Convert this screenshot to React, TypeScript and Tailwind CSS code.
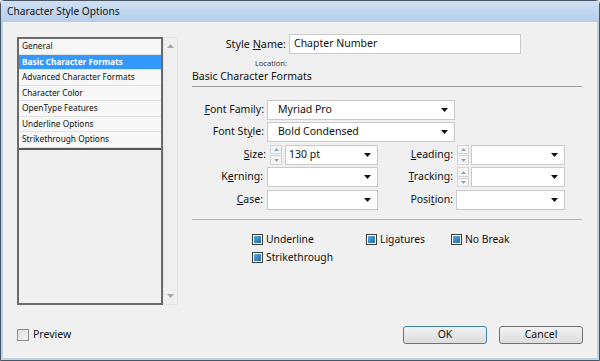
import React from "react";

const ui = "font-['Noto_Sans',sans-serif]";

function Arrow() {
  return (
    <svg width="7" height="4" viewBox="0 0 7 4" className="shrink-0">
      <path d="M0 0h7L3.5 4z" fill="#111" />
    </svg>
  );
}

function Select({ w, value, pad = "pl-[3px]" }: { w: string; value?: string; pad?: string }) {
  return (
    <div
      className={`${w} flex h-[20px] items-center justify-between border border-[#c9c9c9] bg-white ${pad} pr-[6px] text-[10.5px] text-[#111]`}
    >
      <span>{value}</span>
      <Arrow />
    </div>
  );
}

function Spinner() {
  return (
    <div className="flex h-[20px] w-[12px] shrink-0 flex-col gap-[1px]">
      {[0, 1].map((i) => (
        <div
          key={i}
          className="flex flex-1 items-center justify-center border border-[#d4d4d4] bg-[#f4f4f4]"
        >
          <svg width="5" height="3" viewBox="0 0 5 3">
            <path d={i === 0 ? "M0 3h5L2.5 0z" : "M0 0h5L2.5 3z"} fill="#8ea6bd" />
          </svg>
        </div>
      ))}
    </div>
  );
}

function Label({ w, children }: { w: string; children: React.ReactNode }) {
  return <div className={`${w} shrink-0 text-right text-[10.5px] text-[#111]`}>{children}</div>;
}

function Check({ label }: { label: string }) {
  return (
    <div className="flex items-center gap-[3px]">
      <div className="h-[11px] w-[11px] border border-[#3a3a3a] bg-white p-[1px]">
        <div className="h-full w-full bg-gradient-to-br from-[#5aa8dd] to-[#1f6aa8]" />
      </div>
      <span className="text-[10.3px] text-[#111]">{label}</span>
    </div>
  );
}

const items = [
  "General",
  "Basic Character Formats",
  "Advanced Character Formats",
  "Character Color",
  "OpenType Features",
  "Underline Options",
  "Strikethrough Options",
];

export default function App() {
  return (
    <div className={`${ui} h-[361px] w-[600px] overflow-hidden bg-[#f0f0f0]`}>
      <div className="flex h-full flex-col rounded-t-[4px] border border-[#4a5563] bg-[#bcd3ec]">
        {/* title bar */}
        <div className="flex h-[21px] items-center bg-gradient-to-b from-[#cfe0f3] to-[#b4cdea] pl-[6px] text-[10.2px] text-[#111]">
          Character Style Options
        </div>
        <div className="mx-[2px] mb-[2px] flex flex-1 flex-col bg-[#f0f0f0]">
          <div className="flex flex-1">
            {/* left list */}
            <div className="ml-[14px] mt-[15px] flex h-[268px]">
              <div className="flex w-[146px] flex-col border-2 border-[#6a6a6a] bg-[#f0f0f0]">
                {items.map((t, i) => (
                  <div
                    key={t}
                    className={`flex h-[15.5px] items-center border-b border-[#e2e2e2] pl-[3px] text-[8.3px] ${
                      i === 1 ? "bg-[#3399ff] font-bold text-white" : "bg-[#f7f7f7] text-[#111]"
                    }`}
                  >
                    {t}
                  </div>
                ))}
                <div className="border-t-2 border-[#555]" />
              </div>
              <div className="flex w-[15px] flex-col items-center justify-between border border-[#e4e4e4] bg-[#efefef] py-[6px]">
                <svg width="7" height="4" viewBox="0 0 7 4">
                  <path d="M0 4h7L3.5 0z" fill="#a8a8a8" />
                </svg>
                <svg width="7" height="4" viewBox="0 0 7 4">
                  <path d="M0 0h7L3.5 4z" fill="#a8a8a8" />
                </svg>
              </div>
            </div>

            {/* right panel */}
            <div className="ml-[14px] flex w-[390px] flex-col">
              <div className="mt-[12px] flex items-center">
                <div className="w-[97px] pr-[3px] text-right text-[10.8px] text-[#111]">
                  Style <u>N</u>ame:
                </div>
                <div className="flex h-[20px] w-[232px] items-center border border-[#c9c9c9] bg-white pl-[4px] text-[10.5px] text-[#111]">
                  Chapter Number
                </div>
              </div>
              <div className="mt-[4px] w-[95px] text-right text-[7.5px] leading-[10px] text-[#333]">Location:</div>
              <div className="mt-[1px] border-b border-[#9a9a9a] pb-[1px] text-[10.5px] text-[#111]">
                Basic Character Formats
              </div>

              <div className="mt-[13px] flex flex-col gap-[2.5px]">
                <div className="flex items-center gap-[3px]">
                  <Label w="w-[72px]">
                    <u>F</u>ont Family:
                  </Label>
                  <Select w="w-[188px]" value="Myriad Pro" pad="pl-[10px]" />
                </div>
                <div className="flex items-center gap-[3px]">
                  <Label w="w-[72px]">
                    Font St<u>y</u>le:
                  </Label>
                  <Select w="w-[188px]" value="Bold Condensed" pad="pl-[10px]" />
                </div>
                <div className="flex items-center">
                  <Label w="w-[74px]">
                    <u>S</u>ize:
                  </Label>
                  <div className="ml-[4px] flex w-[108px] items-center gap-[3px]">
                    <Spinner />
                    <Select w="flex-1" value="130 pt" />
                  </div>
                  <Label w="w-[75px]">
                    <u>L</u>eading:
                  </Label>
                  <div className="ml-[4px] flex w-[108px] items-center gap-[2px]">
                    <Spinner />
                    <Select w="flex-1" />
                  </div>
                </div>
                <div className="flex items-center">
                  <Label w="w-[71px]">
                    K<u>e</u>rning:
                  </Label>
                  <div className="ml-[4px] w-[111px]">
                    <Select w="w-full" />
                  </div>
                  <Label w="w-[75px]">
                    <u>T</u>racking:
                  </Label>
                  <div className="ml-[4px] flex w-[108px] items-center gap-[2px]">
                    <Spinner />
                    <Select w="flex-1" />
                  </div>
                </div>
                <div className="flex items-center">
                  <Label w="w-[71px]">
                    <u>C</u>ase:
                  </Label>
                  <div className="ml-[4px] w-[111px]">
                    <Select w="w-full" />
                  </div>
                  <Label w="w-[75px]">
                    Posi<u>t</u>ion:
                  </Label>
                  <div className="ml-[3px] w-[109px]">
                    <Select w="w-full" />
                  </div>
                </div>
              </div>

              <div className="mt-[9px] border-b border-[#b5b5b5]" />

              <div className="ml-[60px] mt-[12px] flex flex-col gap-[3px]">
                <div className="flex items-center">
                  <div className="w-[114px]">
                    <Check label="Underline" />
                  </div>
                  <div className="w-[85px]">
                    <Check label="Ligatures" />
                  </div>
                  <Check label="No Break" />
                </div>
                <Check label="Strikethrough" />
              </div>
            </div>
          </div>

          {/* footer */}
          <div className="mb-[14px] flex items-center justify-between pl-[14px] pr-[14px]">
            <div className="flex items-center gap-[4px]">
              <div className="h-[12px] w-[12px] border border-[#8c8c8c] bg-gradient-to-br from-[#dcdcdc] to-[#f7f7f7]" />
              <span className="text-[10.5px] text-[#111]">Preview</span>
            </div>
            <div className="flex gap-[12px]">
              <div className="flex h-[18px] w-[84px] items-center justify-center rounded-[3px] border border-[#3c7fb1] bg-gradient-to-b from-[#f2f2f2] to-[#dcdcdc] text-[10.5px] text-[#111]">
                OK
              </div>
              <div className="flex h-[18px] w-[84px] items-center justify-center rounded-[3px] border border-[#707070] bg-gradient-to-b from-[#f2f2f2] to-[#dcdcdc] text-[10.5px] text-[#111]">
                Cancel
              </div>
            </div>
          </div>
        </div>
      </div>
    </div>
  );
}
